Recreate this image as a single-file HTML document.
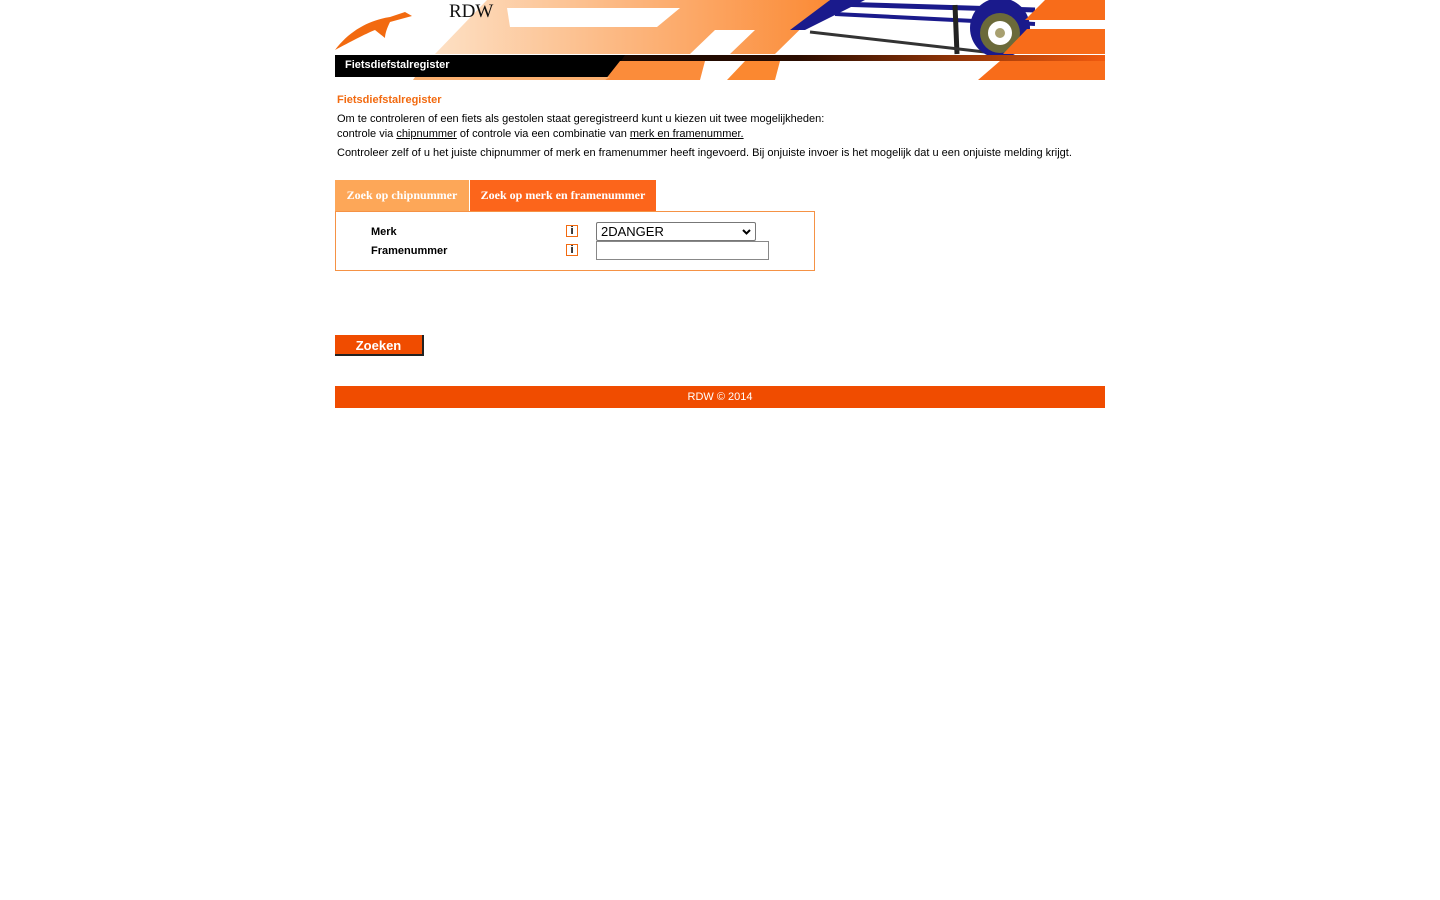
<!DOCTYPE html>
<html><head><meta charset="utf-8"><style>
body{margin:0;background:#fff;font-family:"Liberation Sans",Arial,sans-serif;}
.abs{position:absolute;}
.t{position:absolute;font-size:11px;color:#000;white-space:nowrap;}
a{color:#000;}
</style></head><body>
<svg class="abs" style="left:335px;top:0" width="770" height="80" viewBox="0 0 770 80">
<defs>
<linearGradient id="g1" x1="0" x2="1"><stop offset="0" stop-color="#fde0c4"/><stop offset="1" stop-color="#fb8a35"/></linearGradient>
<linearGradient id="g2" x1="0" x2="1"><stop offset="0" stop-color="#000"/><stop offset="0.6" stop-color="#2a0c00"/><stop offset="1" stop-color="#f25a0e"/></linearGradient>
</defs>
<polygon points="100,54 152,0 495,0 455,54" fill="url(#g1)"/>
<polygon points="172,8 345,8 322,27 175,27" fill="#fff"/>
<polygon points="380,30 420,30 395,54 355,54" fill="#fff"/>
<polygon points="495,0 720,0 690,54 440,54" fill="#fff"/>
<polygon points="495,0 530,0 470,30 455,30" fill="#1a1a8c"/>
<line x1="500" y1="4" x2="700" y2="10" stroke="#1a1a8c" stroke-width="5"/>
<line x1="500" y1="14" x2="700" y2="24" stroke="#1a1a8c" stroke-width="4"/>
<line x1="620" y1="5" x2="622" y2="54" stroke="#222" stroke-width="5"/>
<line x1="475" y1="32" x2="650" y2="52" stroke="#333" stroke-width="3"/>
<circle cx="665" cy="28" r="30" fill="#1a1a8c"/>
<circle cx="665" cy="33" r="20" fill="#6b6a3a"/>
<circle cx="665" cy="33" r="12" fill="#fff"/>
<circle cx="665" cy="33" r="5" fill="#a8a070"/>
<polygon points="710,0 770,0 770,20 690,20" fill="#f86c1a"/>
<polygon points="692,29 770,29 770,54 668,54" fill="#f86c1a"/>
<path d="M0,50 C15,30 35,20 55,17 L70,12 L77,16 L55,22 C52,28 50,34 50,38 L40,30 C30,34 15,42 0,50Z" fill="#f26a10"/>
<text x="114" y="17" font-family="Liberation Serif,serif" font-size="19" fill="#111">RDW</text>
<rect x="0" y="55" width="770" height="6" fill="url(#g2)"/>
<polygon points="0,55 290,55 275,77 0,77" fill="#000"/>
<polygon points="285,61 370,61 365,80 270,80" fill="#fb8c3a"/>
<polygon points="410,61 445,61 440,80 392,80" fill="#fb8830"/>
<polygon points="665,61 770,61 770,80 643,80" fill="#f86c1a"/>
<polygon points="80,77 275,77 270,80 78,80" fill="#fbb071"/>
</svg>
<div class="t" style="left:345px;top:59px;color:#fff;font-weight:bold;">Fietsdiefstalregister</div>
<div class="t" style="left:337px;top:94px;color:#f26a10;font-weight:bold;">Fietsdiefstalregister</div>
<div class="t" style="left:337px;top:113px;">Om te controleren of een fiets als gestolen staat geregistreerd kunt u kiezen uit twee mogelijkheden:</div>
<div class="t" style="left:337px;top:128px;">controle via <a href="#">chipnummer</a> of controle via een combinatie van <a href="#">merk en framenummer.</a></div>
<div class="t" style="left:337px;top:147px;">Controleer zelf of u het juiste chipnummer of merk en framenummer heeft ingevoerd. Bij onjuiste invoer is het mogelijk dat u een onjuiste melding krijgt.</div>
<div class="abs" style="left:335px;top:180px;width:134px;height:31px;background:#fda758;color:#fff;font:bold 12px 'Liberation Serif',serif;line-height:30px;text-align:center;">Zoek op chipnummer</div>
<div class="abs" style="left:470px;top:180px;width:186px;height:31px;background:#fc651b;color:#fff;font:bold 12px 'Liberation Serif',serif;line-height:30px;text-align:center;">Zoek op merk en framenummer</div>
<div class="abs" style="left:335px;top:211px;width:478px;height:58px;border:1px solid #f59245;"></div>
<div class="t" style="left:371px;top:226px;font-weight:bold;">Merk</div>
<div class="t" style="left:371px;top:245px;font-weight:bold;">Framenummer</div>
<div class="abs" style="left:566px;top:225px;width:10px;height:10px;border:1px solid #f26a10;font:bold 11px 'Liberation Sans';line-height:10px;text-align:center;">i</div>
<div class="abs" style="left:566px;top:244px;width:10px;height:10px;border:1px solid #f26a10;font:bold 11px 'Liberation Sans';line-height:10px;text-align:center;">i</div>
<div class="abs" style="left:596px;top:222px;width:158px;height:17px;border:1px solid #777;border-radius:2px;font-size:13px;line-height:17px;"><span style="padding-left:4px">2DANGER</span><svg style="position:absolute;right:4px;top:6px" width="9" height="6"><path d="M1,1 L4.5,4.5 L8,1" stroke="#000" stroke-width="2" fill="none"/></svg></div>
<div class="abs" style="left:596px;top:241px;width:171px;height:17px;border:1px solid #888;"></div>
<div class="abs" style="left:335px;top:335px;width:87px;height:19px;background:#f04c00;border-right:2px solid #222;border-bottom:2px solid #222;color:#fff;font:bold 13px 'Liberation Sans';line-height:21px;text-align:center;">Zoeken</div>
<div class="abs" style="left:335px;top:386px;width:770px;height:22px;background:#f04c00;color:#fff;font-size:11px;line-height:23px;text-align:center;">RDW © 2014</div>
</body></html>
